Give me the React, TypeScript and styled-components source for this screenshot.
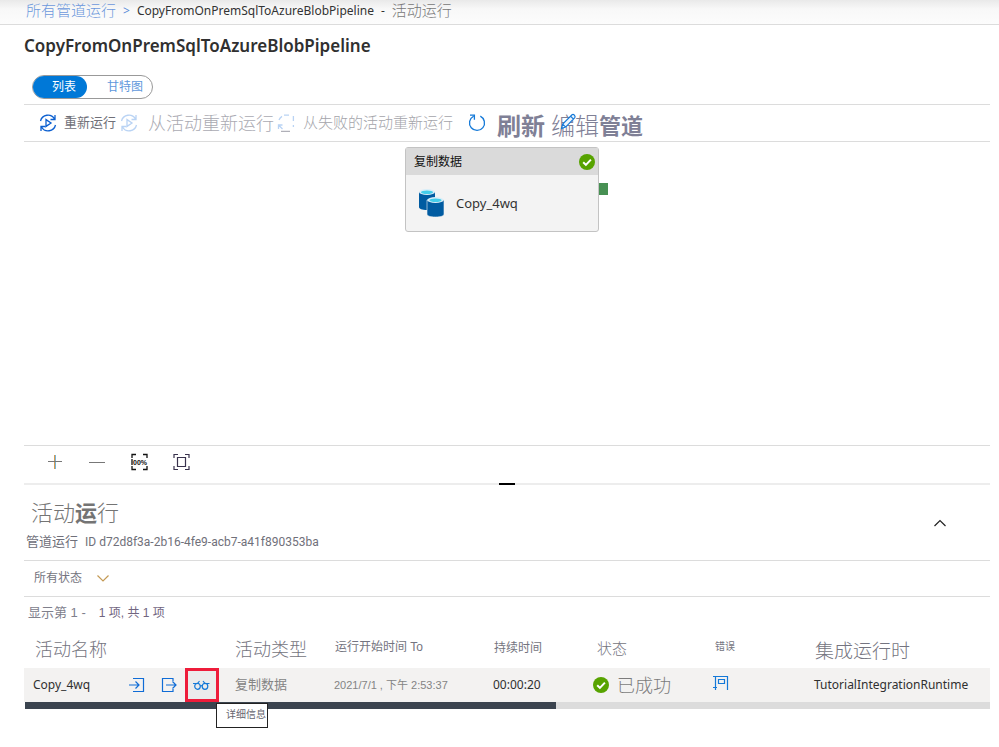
import React from "react";
import styled, { createGlobalStyle, css } from "styled-components";

const GlobalStyle = createGlobalStyle`
  *, *::before, *::after { box-sizing: border-box; }
  body {
    margin: 0;
    background: #fff;
    color: #333;
    font-family: "Noto Sans", "Noto Sans CJK SC", sans-serif;
    font-size: 12px;
    line-height: 16px;
  }
  button { font-family: inherit; }
`;

const cjk = css`
  font-family: "Liberation Sans", "Noto Sans CJK SC", sans-serif;
`;

type TextProps = { $size?: number; $weight?: number; $color?: string; $top?: number };

const Text = styled.span<TextProps>`
  ${cjk}
  padding-top: ${(p) => p.$top ?? 0}px;
  font-size: ${(p) => p.$size ?? 12}px;
  font-weight: ${(p) => p.$weight ?? 400};
  color: ${(p) => p.$color ?? "#747480"};
  line-height: 24px;
  white-space: nowrap;
`;

const Breadcrumb = styled.nav`
  display: flex;
  align-items: center;
  gap: 7px;
  height: 25px;
  padding: 0 24px 3px 26px;
  border-bottom: 1px solid #dcdcdc;
  background: linear-gradient(#e9e9e9, #f8f8f8 9px, #fcfcfc);
  white-space: nowrap;
`;

const CrumbLink = styled.a`
  ${cjk}
  color: #6c98dc;
  font-size: 15px;
  font-weight: 300;
  text-decoration: none;
`;

const CrumbMark = styled.span`
  color: #5b8cd8;
`;

const Page = styled.main`
  padding: 0 9px 36px 24px;
`;

const Title = styled.h1`
  margin: 0;
  font-size: 17px;
  font-weight: 600;
  line-height: 42px;
  color: #303030;
`;

const Toggle = styled.div`
  display: inline-flex;
  height: 24px;
  margin: 8px 0 5px 8px;
  border: 1px solid #999;
  border-radius: 12px;
  vertical-align: top;
`;

const ToggleButton = styled.button<{ $active?: boolean }>`
  ${cjk}
  height: 22px;
  padding: 0 ${(p) => (p.$active ? 11 : 9)}px 0 ${(p) => (p.$active ? 19 : 20)}px;
  border: 0;
  border-radius: 11px;
  background: ${(p) => (p.$active ? "#0078d7" : "transparent")};
  color: ${(p) => (p.$active ? "#fff" : "#6098dc")};
  font-size: 12px;
  line-height: 20px;
`;

const Toolbar = styled.div`
  display: flex;
  align-items: center;
  height: 38px;
  padding-left: 15px;
  border-top: 1px solid #dcdcdc;
  border-bottom: 1px solid #dcdcdc;
`;

const ToolButton = styled.button<{ $gap: number; $after?: number }>`
  position: relative;
  display: flex;
  align-items: center;
  gap: ${(p) => p.$gap}px;
  margin-right: ${(p) => p.$after ?? 0}px;
  padding: 0;
  border: 0;
  background: none;
  svg { flex: none; }
`;

const PencilMark = styled.span`
  position: absolute;
  left: 9px;
  top: 5px;
  line-height: 0;
`;

const Canvas = styled.section`
  position: relative;
  height: 303px;
`;

const Node = styled.article`
  position: absolute;
  left: 381px;
  top: 5px;
  width: 194px;
  height: 85px;
  border: 1px solid #c3c3c3;
  border-radius: 3px;
  background: #f3f3f3;
`;

const NodeHead = styled.header`
  display: flex;
  align-items: center;
  justify-content: space-between;
  height: 27px;
  padding: 0 3px 0 8px;
  background: #dadada;
`;

const NodeBody = styled.div`
  display: flex;
  align-items: center;
  gap: 10px;
  height: 56px;
  padding-left: 12px;
  font-size: 13px;
`;

const Port = styled.i`
  position: absolute;
  left: 193px;
  top: 35px;
  width: 9px;
  height: 12px;
  background: #479053;
`;

const ZoomBar = styled.div`
  display: flex;
  align-items: center;
  gap: 24px;
  height: 38px;
  padding: 0 0 6px 22px;
  border-top: 1px solid #dcdcdc;
`;

const IconButton = styled.button`
  display: grid;
  place-items: center;
  width: 18px;
  height: 18px;
  padding: 0;
  border: 0;
  background: none;
`;

const Splitter = styled.div`
  display: flex;
  justify-content: center;
  height: 2px;
  background: #ededed;
  &::before {
    content: "";
    width: 16px;
    background: #000;
  }
`;

const PanelHead = styled.header`
  display: flex;
  align-items: center;
  justify-content: space-between;
  height: 76px;
  padding: 0 41px 0 2px;
  border-bottom: 1px solid #dcdcdc;
`;

const PanelText = styled.div`
  padding-top: 6px;
`;

const PanelTitle = styled.h2`
  ${cjk}
  margin: 0;
  padding-left: 5px;
  color: #747474;
  font-size: 22px;
  font-weight: 300;
  line-height: 32px;
  b { font-weight: 700; }
`;

const RunId = styled.p`
  ${cjk}
  margin: 0;
  color: #70707a;
  font-size: 13px;
  line-height: 24px;
  display: flex;
  gap: 7px;
`;

const Guid = styled.span`
  font-family: Roboto, sans-serif;
  font-size: 12px;
`;

const Filter = styled.div`
  height: 36px;
  padding-left: 10px;
  border-bottom: 1px solid #dcdcdc;
`;

const FilterButton = styled.button`
  display: flex;
  align-items: center;
  gap: 14px;
  height: 34px;
  padding: 0;
  border: 0;
  background: none;
`;

const Count = styled.p`
  display: flex;
  gap: 13px;
  margin: 0;
  padding: 4px 0 4px 4px;
`;

const Grid = styled.table`
  width: 100%;
  table-layout: fixed;
  border-collapse: collapse;
`;

const Col = styled.col<{ $w?: number }>`
  width: ${(p) => (p.$w ? `${p.$w}px` : "auto")};
`;

const HeadCell = styled.th<{ $top?: number; $bottom?: number }>`
  height: 39px;
  padding: ${(p) => p.$top ?? 0}px 0 ${(p) => p.$bottom ?? 0}px 11px;
  text-align: left;
  vertical-align: middle;
`;

const Cell = styled.td<{ $pad?: number }>`
  height: 34px;
  padding: 0 0 0 ${(p) => p.$pad ?? 10}px;
  background: #f3f2f1;
  color: #303030;
  font-size: 12px;
  white-space: nowrap;
`;

const Actions = styled.div`
  position: relative;
  display: flex;
  align-items: center;
  height: 34px;
`;

const RunName = styled.span`
  width: 88px;
`;

const ActionButton = styled.button<{ $marked?: boolean }>`
  display: grid;
  place-items: center;
  width: ${(p) => (p.$marked ? 34 : 32)}px;
  height: 34px;
  padding: 0;
  border: ${(p) => (p.$marked ? "3px solid #ee1c3a" : "0")};
  background: ${(p) => (p.$marked ? "#ebebeb" : "none")};
`;

const Tooltip = styled.span`
  ${cjk}
  position: absolute;
  z-index: 1;
  left: 183px;
  top: 35px;
  width: 52px;
  height: 25px;
  padding-left: 9px;
  border: 1px solid #222;
  background: #fff;
  color: #666670;
  font-size: 10px;
  line-height: 22px;
`;

const Status = styled.div`
  display: flex;
  align-items: center;
  gap: 8px;
`;

const Scroll = styled.div`
  height: 7px;
  margin-left: 1px;
  background: #dcdcdc;
  &::before {
    content: "";
    display: block;
    width: 55%;
    height: 100%;
    background: #3b444f;
  }
`;

const Rerun = ({ faded }: { faded?: boolean }) => (
  <svg width="18" height="18" viewBox="0 0 18 18" fill="none" stroke={faded ? "#b9d3f4" : "#0b5fd0"} strokeWidth="1.3">
    <path d="M1.5 7A7.6 7.6 0 0 1 15.5 5M16.5 11A7.6 7.6 0 0 1 2.5 13M16 1v4.500h-4.500M2 17v-4.500h4.500" />
    <path d="M7 5.600v6.800L12 9z" />
  </svg>
);

const RerunFailed = () => (
  <svg width="18" height="18" viewBox="0 0 18 18" fill="none" stroke="#b9d3f4" strokeWidth="1.3">
    <path d="M2 6a7 7 0 0 1 3-3.600M7 1.200h5M16.400 2v5M16.400 11v2M1.500 15v-4h4M1.500 11l4 4" />
    <path d="M4 17.400h9" stroke="#b0b0b8" />
  </svg>
);

const Refresh = () => (
  <svg width="18" height="18" viewBox="0 0 18 18" fill="none" stroke="#1479d8" strokeWidth="1.3">
    <path d="M12.300 2.200A7.500 7.500 0 1 1 5.500 2.300M2 1.200h4.400v4.600" />
  </svg>
);

const Pencil = () => (
  <svg width="17" height="17" viewBox="0 0 17 17" fill="#eef6fd" stroke="#1479d8" strokeWidth="1.2">
    <path d="M1.500 15.500l1.200-4.400L12 1.800c1.600-1 3.800 1 2.800 2.800l-9.200 9.500zM10.500 3.200l3 3M2.700 11.100l3 3" />
  </svg>
);

const Check = () => (
  <svg width="16" height="16" viewBox="0 0 16 16">
    <circle cx="8" cy="8" r="8" fill="#57a300" />
    <path d="M4.200 8.200l2.700 2.700 5-5.300" fill="none" stroke="#fff" strokeWidth="2" />
  </svg>
);

const Databases = () => (
  <svg width="28" height="30" viewBox="0 0 28 30">
    <path d="M1 4v15c0 2 3 3 8 3s8-1 8-3V4z" fill="#005ba1" />
    <ellipse cx="9" cy="4" rx="8" ry="3" fill="#d9eef8" />
    <ellipse cx="9" cy="4.300" rx="6" ry="1.800" fill="#43cdea" />
    <path d="M9 12v14c0 2 3 3 8.500 3s8.500-1 8.500-3V12z" fill="#005ba1" stroke="#f3f3f3" strokeWidth="0.600" />
    <ellipse cx="17.500" cy="12" rx="8.200" ry="3" fill="#d9eef8" />
    <ellipse cx="17.500" cy="12.300" rx="6" ry="1.800" fill="#43cdea" />
  </svg>
);

const Input = () => (
  <svg width="16" height="16" viewBox="0 0 16 16" fill="none" stroke="#0f6cd6" strokeWidth="1.2">
    <path d="M4 1.500h10.500v13H4M0 8h10M6.500 4.500L10 8l-3.500 3.500" />
  </svg>
);

const Output = () => (
  <svg width="16" height="16" viewBox="0 0 16 16" fill="none" stroke="#0f6cd6" strokeWidth="1.2">
    <path d="M12 4V1.500H1.500v13H12V12M5 8h10M11.500 4.500L15 8l-3.500 3.500" />
  </svg>
);

const Glasses = () => (
  <svg width="18" height="12" viewBox="0 0 18 12" fill="none" stroke="#1479d8" strokeWidth="1.2">
    <ellipse cx="4.500" cy="7.300" rx="2.800" ry="3" />
    <ellipse cx="12" cy="7.300" rx="2.800" ry="3" />
    <path d="M7.200 7q1-.8 2 0M0 4.500h4.500L6.500 2M16.500 4.500H12L10 2" />
  </svg>
);

const Message = () => (
  <svg width="16" height="16" viewBox="0 0 16 16" fill="none" stroke="#1479d8" strokeWidth="1.2">
    <path d="M2.500 15V1.500h12V15M0 12.500h4M0 1.500h3M5.500 4.500h6v4h-6z" />
  </svg>
);

const Plus = () => (
  <svg width="16" height="16" viewBox="0 0 16 16">
    <path d="M7.500 1v14" stroke="#d99a4e" />
    <path d="M8.500 1v14" stroke="#75b5da" />
    <path d="M1 7.500h14" stroke="#777" />
  </svg>
);

const Minus = () => (
  <svg width="16" height="16" viewBox="0 0 16 16">
    <path d="M0 8.500h16" stroke="#777" />
  </svg>
);

const corners = "M2 5V1.500h4M13 1.500h4V5M17 13v3.500h-4M6 16.500H2V13";

const ActualSize = () => (
  <svg width="18" height="18" viewBox="0 0 18 18" fill="none" stroke="#111" strokeWidth="1.300">
    <path d={corners} />
    <text x="10" y="11.500" textAnchor="middle" fontFamily="Liberation Sans" fontWeight="700" fontSize="7" fill="#111" stroke="none">00%</text>
    <path d="M2 6v6" />
  </svg>
);

const Fit = () => (
  <svg width="18" height="18" viewBox="0 0 18 18" fill="none" stroke="#39324d" strokeWidth="1.200">
    <path d={corners} />
    <path d="M5.500 4.500h8v9h-8z" />
  </svg>
);

const Chevron = ({ up }: { up?: boolean }) => (
  <svg width="14" height="8" viewBox="0 0 14 8" fill="none" stroke={up ? "#222" : "#c49a55"} strokeWidth="1.200">
    <path d={up ? "M1.500 7L7 1.500 12.500 7" : "M1.500 1.500L7 7l5.500-5.500"} />
  </svg>
);

export default function App() {
  return (
    <>
      <GlobalStyle />
      <Breadcrumb>
        <CrumbLink href="#">所有管道运行</CrumbLink>
        <CrumbMark>&gt;</CrumbMark>
        <span>CopyFromOnPremSqlToAzureBlobPipeline</span>
        <span>-</span>
        <Text $size={15} $weight={300} $color="#777">活动运行</Text>
      </Breadcrumb>
      <Page>
        <Title>CopyFromOnPremSqlToAzureBlobPipeline</Title>
        <Toggle>
          <ToggleButton $active>列表</ToggleButton>
          <ToggleButton>甘特图</ToggleButton>
        </Toggle>
        <Toolbar>
          <ToolButton $gap={7} $after={4}>
            <Rerun />
            <Text $size={13} $color="#707078">重新运行</Text>
          </ToolButton>
          <ToolButton $gap={10} $after={3} disabled>
            <Rerun faded />
            <Text $size={18} $weight={300} $color="#aaaab2" $top={2}>从活动重新运行</Text>
          </ToolButton>
          <ToolButton $gap={8} $after={15} disabled>
            <RerunFailed />
            <Text $size={15} $weight={300} $color="#a4a4aa">从失败的活动重新运行</Text>
          </ToolButton>
          <ToolButton $gap={11} $after={6}>
            <Refresh />
            <Text $size={24} $weight={700} $color="#7f8096" $top={7}>刷新</Text>
          </ToolButton>
          <ToolButton $gap={0}>
            <Text $size={24} $weight={300} $color="#7f8096" $top={7}>编辑</Text>
            <Text $size={22} $weight={700} $color="#7f8096" $top={7}>管道</Text>
            <PencilMark><Pencil /></PencilMark>
          </ToolButton>
        </Toolbar>
        <Canvas>
          <Node>
            <NodeHead>
              <Text $color="#111">复制数据</Text>
              <Check />
            </NodeHead>
            <NodeBody>
              <Databases />
              Copy_4wq
            </NodeBody>
            <Port />
          </Node>
        </Canvas>
        <ZoomBar>
          <IconButton aria-label="放大"><Plus /></IconButton>
          <IconButton aria-label="缩小"><Minus /></IconButton>
          <IconButton aria-label="实际大小"><ActualSize /></IconButton>
          <IconButton aria-label="适应屏幕"><Fit /></IconButton>
        </ZoomBar>
        <Splitter />
        <PanelHead>
          <PanelText>
            <PanelTitle>活动<b>运</b>行</PanelTitle>
            <RunId><span>管道运行</span><Guid>ID d72d8f3a-2b16-4fe9-acb7-a41f890353ba</Guid></RunId>
          </PanelText>
          <IconButton aria-label="折叠"><Chevron up /></IconButton>
        </PanelHead>
        <Filter>
          <FilterButton>
            <Text>所有状态</Text>
            <Chevron />
          </FilterButton>
        </Filter>
        <Count>
          <Text $size={13} $color="#80808c">显示第 1 -</Text>
          <Text $color="#71657f">1 项, 共 1 项</Text>
        </Count>
        <Grid>
          <colgroup>
            <Col $w={200} />
            <Col $w={100} />
            <Col $w={159} />
            <Col $w={103} />
            <Col $w={118} />
            <Col $w={100} />
            <Col />
          </colgroup>
          <thead>
            <tr>
              <HeadCell $top={2}><Text $size={18} $weight={300}>活动名称</Text></HeadCell>
              <HeadCell $top={2}><Text $size={18} $weight={300}>活动类型</Text></HeadCell>
              <HeadCell $bottom={4}><Text>运行开始时间 To</Text></HeadCell>
              <HeadCell $bottom={2}><Text>持续时间</Text></HeadCell>
              <HeadCell><Text $size={15} $weight={300}>状态</Text></HeadCell>
              <HeadCell $bottom={4}><Text $size={10}>错误</Text></HeadCell>
              <HeadCell $top={6}><Text $size={19} $weight={300}>集成运行时</Text></HeadCell>
            </tr>
          </thead>
          <tbody>
            <tr>
              <Cell $pad={9}>
                <Actions>
                  <RunName>Copy_4wq</RunName>
                  <ActionButton aria-label="输入"><Input /></ActionButton>
                  <ActionButton aria-label="输出"><Output /></ActionButton>
                  <ActionButton $marked aria-label="详细信息"><Glasses /></ActionButton>
                  <Tooltip role="tooltip">详细信息</Tooltip>
                </Actions>
              </Cell>
              <Cell $pad={11}><Text $size={13} $color="#848484">复制数据</Text></Cell>
              <Cell><Text $size={11} $color="#848484">2021/7/1 , 下午 2:53:37</Text></Cell>
              <Cell>00:00:20</Cell>
              <Cell $pad={7}><Status><Check /><Text $size={18} $weight={300} $color="#7c7c7c" $top={2}>已成功</Text></Status></Cell>
              <Cell $pad={9}><Message /></Cell>
              <Cell>TutorialIntegrationRuntime</Cell>
            </tr>
          </tbody>
        </Grid>
        <Scroll />
      </Page>
    </>
  );
}
